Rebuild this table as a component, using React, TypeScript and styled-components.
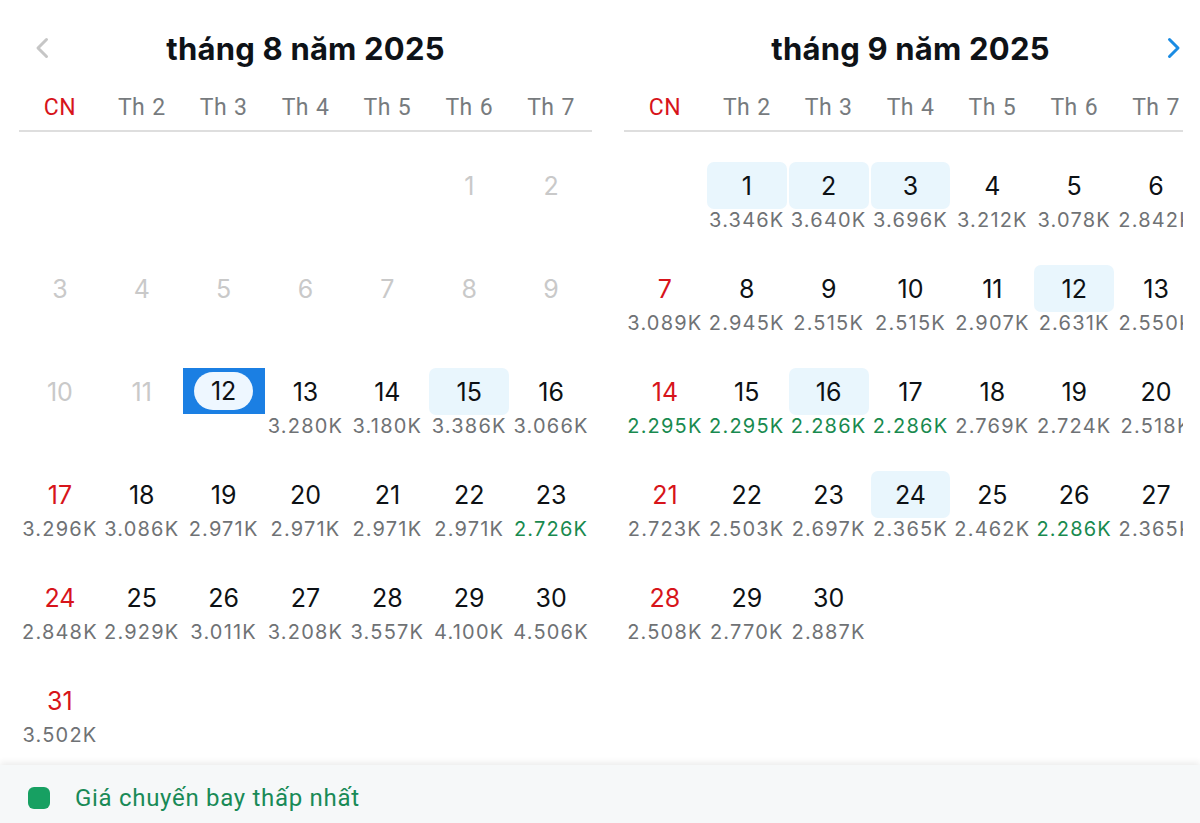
import * as React from 'react';
import styled, { createGlobalStyle } from 'styled-components';

type Day = {
  d: number;
  price?: string;
  cheap?: boolean;
  past?: boolean;
  marked?: boolean;
  selected?: boolean;
};

type Month = {
  title: string;
  offset: number;
  days: Day[];
  prev?: boolean;
  next?: boolean;
};

const WEEKDAYS = ['CN', 'Th 2', 'Th 3', 'Th 4', 'Th 5', 'Th 6', 'Th 7'];

const august: Month = {
  title: 'tháng 8 năm 2025',
  offset: 5,
  prev: true,
  days: [
    ...Array.from({ length: 11 }, (_, i) => ({ d: i + 1, past: true })),
    { d: 12, selected: true },
    { d: 13, price: '3.280K' },
    { d: 14, price: '3.180K' },
    { d: 15, price: '3.386K', marked: true },
    { d: 16, price: '3.066K' },
    { d: 17, price: '3.296K' },
    { d: 18, price: '3.086K' },
    { d: 19, price: '2.971K' },
    { d: 20, price: '2.971K' },
    { d: 21, price: '2.971K' },
    { d: 22, price: '2.971K' },
    { d: 23, price: '2.726K', cheap: true },
    { d: 24, price: '2.848K' },
    { d: 25, price: '2.929K' },
    { d: 26, price: '3.011K' },
    { d: 27, price: '3.208K' },
    { d: 28, price: '3.557K' },
    { d: 29, price: '4.100K' },
    { d: 30, price: '4.506K' },
    { d: 31, price: '3.502K' },
  ],
};

const september: Month = {
  title: 'tháng 9 năm 2025',
  offset: 1,
  next: true,
  days: [
    { d: 1, price: '3.346K', marked: true },
    { d: 2, price: '3.640K', marked: true },
    { d: 3, price: '3.696K', marked: true },
    { d: 4, price: '3.212K' },
    { d: 5, price: '3.078K' },
    { d: 6, price: '2.842K' },
    { d: 7, price: '3.089K' },
    { d: 8, price: '2.945K' },
    { d: 9, price: '2.515K' },
    { d: 10, price: '2.515K' },
    { d: 11, price: '2.907K' },
    { d: 12, price: '2.631K', marked: true },
    { d: 13, price: '2.550K' },
    { d: 14, price: '2.295K', cheap: true },
    { d: 15, price: '2.295K', cheap: true },
    { d: 16, price: '2.286K', cheap: true, marked: true },
    { d: 17, price: '2.286K', cheap: true },
    { d: 18, price: '2.769K' },
    { d: 19, price: '2.724K' },
    { d: 20, price: '2.518K' },
    { d: 21, price: '2.723K' },
    { d: 22, price: '2.503K' },
    { d: 23, price: '2.697K' },
    { d: 24, price: '2.365K', marked: true },
    { d: 25, price: '2.462K' },
    { d: 26, price: '2.286K', cheap: true },
    { d: 27, price: '2.365K' },
    { d: 28, price: '2.508K' },
    { d: 29, price: '2.770K' },
    { d: 30, price: '2.887K' },
  ],
};

const Chevron: React.FC<{ dir: 'left' | 'right'; color: string }> = ({ dir, color }) => (
  <svg width="14" height="22" viewBox="0 0 14 22">
    <path
      d={dir === 'left' ? 'M11.5 2.5 L3 11 L11.5 19.5' : 'M2.5 2.5 L11 11 L2.5 19.5'}
      fill="none"
      stroke={color}
      strokeWidth="3"
      strokeLinecap="round"
      strokeLinejoin="round"
    />
  </svg>
);

const MonthView: React.FC<{ month: Month }> = ({ month }) => {
  const blanks = Array.from({ length: month.offset });
  return (
    <MonthBlock>
      <Header>
        <NavSlot>{month.prev && <Chevron dir="left" color="#c6c6c6" />}</NavSlot>
        <Title>{month.title}</Title>
        <NavSlot $right>{month.next && <Chevron dir="right" color="#1b8ce3" />}</NavSlot>
      </Header>
      <WeekRow>
        {WEEKDAYS.map((w, i) => (
          <WeekLabel key={w} $sunday={i === 0}>
            {w}
          </WeekLabel>
        ))}
      </WeekRow>
      <DayGrid>
        {blanks.map((_, i) => (
          <Cell key={`b${i}`} />
        ))}
        {month.days.map((day, i) => {
          const sunday = (month.offset + i) % 7 === 0;
          return (
            <Cell key={day.d}>
              {day.selected ? (
                <SelectedBox>
                  <Pill>{day.d}</Pill>
                </SelectedBox>
              ) : (
                <NumberBox $marked={!!day.marked}>
                  <DayNum $past={!!day.past} $sunday={sunday}>
                    {day.d}
                  </DayNum>
                </NumberBox>
              )}
              {day.price && <Price $cheap={!!day.cheap}>{day.price}</Price>}
            </Cell>
          );
        })}
      </DayGrid>
    </MonthBlock>
  );
};

export default function App() {
  return (
    <>
      <GlobalStyle />
      <Page>
        <Viewport>
          <Months>
            <MonthView month={august} />
            <MonthView month={september} />
          </Months>
        </Viewport>
        <Legend>
          <LegendSwatch />
          <LegendText>Giá chuyến bay thấp nhất</LegendText>
        </Legend>
      </Page>
    </>
  );
}

const GlobalStyle = createGlobalStyle`
  html, body {
    margin: 0;
    padding: 0;
    background: #ffffff;
  }
  body {
    font-family: Inter, "Noto Sans", sans-serif;
  }
`;

const Page = styled.div`
  width: 1200px;
  height: 823px;
  display: flex;
  flex-direction: column;
  overflow: hidden;
  background: #fff;
`;

const Viewport = styled.div`
  flex: 1;
  width: 1164px;
  margin-left: 19px;
  overflow: hidden;
`;

const Months = styled.div`
  display: flex;
  gap: 32px;
`;

const MonthBlock = styled.div`
  width: 573px;
  flex-shrink: 0;
`;

const Header = styled.div`
  margin-top: 20px;
  height: 56px;
  display: flex;
  align-items: center;
  justify-content: space-between;
`;

const NavSlot = styled.div<{ $right?: boolean }>`
  width: 30px;
  display: flex;
  justify-content: ${(p) => (p.$right ? 'flex-end' : 'flex-start')};
  padding: 0 16px;
`;

const Title = styled.div`
  font-family: Inter, "Noto Sans", sans-serif;
  font-size: 31px;
  font-weight: 700;
  color: #0e1217;
  letter-spacing: 0.2px;
`;

const WeekRow = styled.div`
  margin-top: 9px;
  height: 45px;
  display: grid;
  grid-template-columns: repeat(7, 1fr);
  align-items: center;
  border-bottom: 2px solid #dedede;
`;

const WeekLabel = styled.div<{ $sunday: boolean }>`
  text-align: center;
  font-family: Roboto, "Noto Sans", sans-serif;
  font-size: 23px;
  letter-spacing: 0.4px;
  word-spacing: 1px;
  color: ${(p) => (p.$sunday ? '#d7141b' : '#777b7e')};
`;

const DayGrid = styled.div`
  display: grid;
  grid-template-columns: repeat(7, 1fr);
  grid-auto-rows: 103px;
`;

const Cell = styled.div`
  padding-top: 30px;
  display: flex;
  flex-direction: column;
  align-items: center;
`;

const NumberBox = styled.div<{ $marked: boolean }>`
  width: calc(100% - 2px);
  height: 47px;
  border-radius: 7px;
  display: flex;
  align-items: center;
  justify-content: center;
  background: ${(p) => (p.$marked ? '#e9f6fd' : 'transparent')};
`;

const DayNum = styled.span<{ $past: boolean; $sunday: boolean }>`
  font-size: 25px;
  color: ${(p) => (p.$past ? '#c9c9c9' : p.$sunday ? '#d7141b' : '#0d1115')};
`;

const SelectedBox = styled.div`
  width: 100%;
  height: 46px;
  background: #1b7fe3;
  display: flex;
  align-items: center;
  justify-content: center;
`;

const Pill = styled.div`
  width: 59px;
  height: 38px;
  border-radius: 19px;
  background: #eef7ff;
  display: flex;
  align-items: center;
  justify-content: center;
  font-size: 25px;
  color: #0d1115;
`;

const Price = styled.div<{ $cheap: boolean }>`
  height: 22px;
  line-height: 22px;
  font-size: 20px;
  letter-spacing: 1.2px;
  white-space: nowrap;
  color: ${(p) => (p.$cheap ? '#198a4f' : '#6f7275')};
`;

const Legend = styled.div`
  height: 51px;
  padding-top: 7px;
  flex-shrink: 0;
  background: #f6f8f9;
  box-shadow: 0 -3px 6px rgba(0, 0, 0, 0.07);
  display: flex;
  align-items: center;
  padding-left: 28px;
  gap: 25px;
`;

const LegendSwatch = styled.div`
  width: 22px;
  height: 22px;
  border-radius: 6px;
  background: #17a062;
`;

const LegendText = styled.div`
  font-family: Roboto, "Noto Sans", sans-serif;
  font-size: 24px;
  letter-spacing: 0.7px;
  color: #198a57;
`;
